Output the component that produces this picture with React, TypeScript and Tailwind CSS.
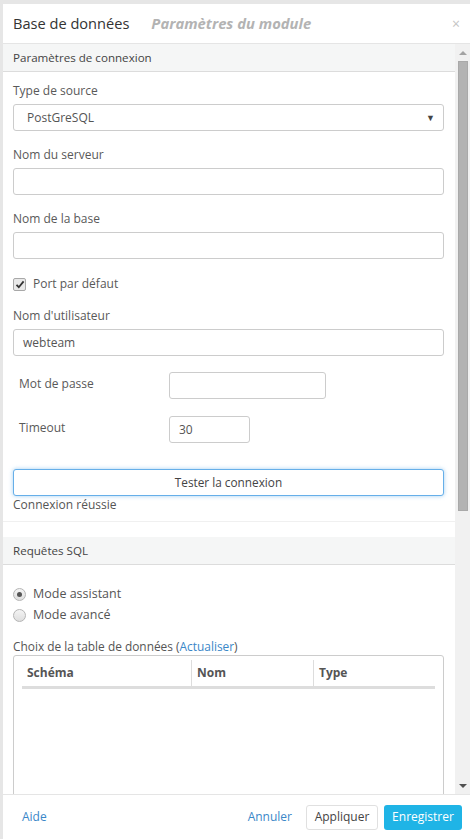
import React from "react";

const font = { fontFamily: "'Open Sans', 'Noto Sans', sans-serif" };

function Label({ children }: { children: React.ReactNode }) {
  return <div className="h-[18px] leading-[18px] mb-[4px] text-[12px] text-[#595959]">{children}</div>;
}

function TextInput({ value, className = "" }: { value?: string; className?: string }) {
  return (
    <div
      className={`h-[27px] border border-[#ccc] rounded-[3px] bg-white px-[9px] flex items-center text-[12px] text-[#555] ${className}`}
    >
      {value}
    </div>
  );
}

function SectionHeader({ title }: { title: string }) {
  return (
    <div className="h-[28px] bg-[#f5f6f6] border-b border-[#dcdcdc] px-[10px] flex items-center text-[11.6px] text-[#444]">
      {title}
    </div>
  );
}

function Radio({ checked, label }: { checked?: boolean; label: string }) {
  return (
    <div className="flex items-center h-[21px]">
      <span className="w-[13px] h-[13px] rounded-full border border-[#b5b5b5] bg-gradient-to-b from-[#f4f4f4] to-[#dedede] flex items-center justify-center">
        {checked && <span className="w-[5px] h-[5px] rounded-full bg-[#555]" />}
      </span>
      <span className="ml-[7px] text-[12.5px] text-[#555]">{label}</span>
    </div>
  );
}

export default function App() {
  return (
    <div className="h-screen bg-[#e6e6e6] pl-[3px] pt-[4px] flex overflow-hidden" style={font}>
      <div className="flex-1 bg-white flex flex-col min-w-0">
        <header className="h-[40px] border-b border-[#e5e5e5] flex items-center pl-[10px] pr-[10px] shrink-0">
          <span className="text-[14.6px] text-[#333]">Base de données</span>
          <span className="ml-[22px] text-[14.8px] italic font-bold text-[#b3b3b3]">Paramètres du module</span>
          <span className="ml-auto text-[#c4c4c4] text-[14px] leading-none">×</span>
        </header>

        <div className="flex-1 flex min-h-0">
          <div className="flex-1 overflow-hidden min-w-0">
            <SectionHeader title="Paramètres de connexion" />
            <div className="pl-[10px] pr-[11px] pt-[10px]">
              <Label>Type de source</Label>
              <div className="h-[27px] border border-[#ccc] rounded-[3px] bg-white pl-[13px] pr-[8px] flex items-center text-[12px] text-[#555]">
                PostGreSQL
                <span className="ml-auto text-[9px] text-[#444]">▼</span>
              </div>

              <div className="mt-[15px]">
                <Label>Nom du serveur</Label>
                <TextInput />
              </div>
              <div className="mt-[15px]">
                <Label>Nom de la base</Label>
                <TextInput />
              </div>

              <div className="flex items-center h-[18px] mt-[16px]">
                <span className="w-[13px] h-[13px] border border-[#a8a8a8] rounded-[2px] bg-[#e9e9e9] flex items-center justify-center">
                  <svg width="10" height="9" viewBox="0 0 10 9">
                    <path d="M1.5 4.8 L3.8 7.2 L8.6 1.4" fill="none" stroke="#333" strokeWidth="1.8" />
                  </svg>
                </span>
                <span className="ml-[7px] text-[12px] text-[#595959]">Port par défaut</span>
              </div>

              <div className="mt-[14px]">
                <Label>Nom d'utilisateur</Label>
                <TextInput value="webteam" />
              </div>

              <div className="flex items-center mt-[16px] pl-[6px]">
                <span className="w-[150px] text-[12px] text-[#595959] -mt-[3px]">Mot de passe</span>
                <TextInput className="w-[157px]" />
              </div>
              <div className="flex items-center mt-[17px] pl-[6px]">
                <span className="w-[150px] text-[12px] text-[#595959] -mt-[3px]">Timeout</span>
                <TextInput value="30" className="w-[81px]" />
              </div>

              <button className="mt-[26px] w-full h-[27px] rounded-[3px] border border-[#66afe9] bg-white text-[11.8px] text-[#444] shadow-[0_0_4px_rgba(102,175,233,0.6)]">
                Tester la connexion
              </button>
              <div className="h-[17px] leading-[17px] text-[12px] text-[#555]">Connexion réussie</div>
            </div>
            <div className="mt-[8px] border-b border-[#f0f0f0]" />
            <div className="h-[15px]" />

            <SectionHeader title="Requêtes SQL" />
            <div className="pl-[10px] pr-[11px] pt-[19px]">
              <Radio checked label="Mode assistant" />
              <Radio label="Mode avancé" />
              <div className="mt-[12px] h-[17px] leading-[17px] text-[11.9px] text-[#555]">
                Choix de la table de données (<span className="text-[#3a87c8]">Actualiser</span>)
              </div>
              <div className="h-[200px] border border-[#ccc] rounded-[3px] pt-[4px] px-[8px]">
                <div className="flex h-[26px] text-[12px] font-bold text-[#555] border-b-[3px] border-[#dddddd] box-content">
                  <div className="w-[170px] pl-[5px] flex items-center border-r border-[#ddd]">Schéma</div>
                  <div className="w-[122px] pl-[5px] flex items-center border-r border-[#ddd]">Nom</div>
                  <div className="flex-1 pl-[5px] flex items-center">Type</div>
                </div>
              </div>
            </div>
          </div>

          <div className="w-[15px] shrink-0 bg-[#f1f1f1] flex flex-col items-center">
            <div className="h-[17px] flex items-center justify-center">
              <span className="w-0 h-0 border-l-[4px] border-r-[4px] border-b-[4px] border-l-transparent border-r-transparent border-b-[#a3a3a3]" />
            </div>
            <div className="w-[10px] h-[450px] bg-[#b3b3b3] border border-[#a9a9a9]" />
            <div className="flex-1" />
            <div className="h-[17px] flex items-center justify-center">
              <span className="w-0 h-0 border-l-[4px] border-r-[4px] border-t-[4px] border-l-transparent border-r-transparent border-t-[#505050]" />
            </div>
          </div>
        </div>

        <footer className="h-[45px] shrink-0 border-t border-[#e5e5e5] flex items-center pl-[19px] pr-[8px]">
          <span className="text-[12px] text-[#3a87c8]">Aide</span>
          <span className="ml-auto text-[12px] text-[#3a87c8]">Annuler</span>
          <button className="ml-[14px] w-[72px] h-[25px] rounded-[3px] border border-[#e0e0e0] bg-white text-[12px] text-[#444]">
            Appliquer
          </button>
          <button className="ml-[6px] w-[78px] h-[25px] rounded-[3px] bg-[#1fb4e6] text-[12px] text-white">
            Enregistrer
          </button>
        </footer>
      </div>
    </div>
  );
}
